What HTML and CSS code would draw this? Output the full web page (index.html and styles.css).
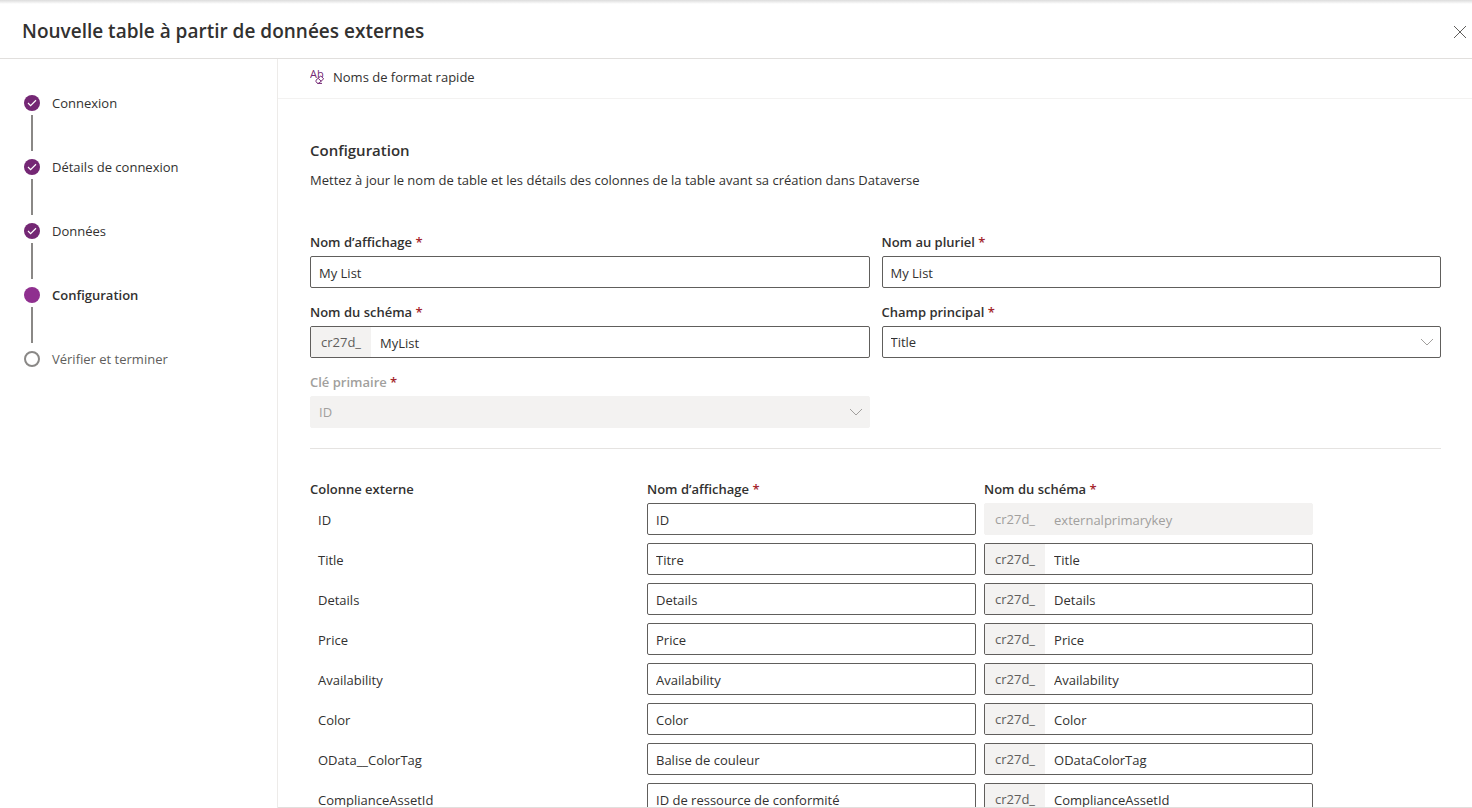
FILE: index.html
```html
<!DOCTYPE html>
<html lang="fr">
<head>
<meta charset="utf-8">
<meta name="viewport" content="width=device-width, initial-scale=1">
<title>Nouvelle table à partir de données externes</title>
<link rel="stylesheet" href="styles.css">
</head>
<body>
<header class="header">
  <h1 class="title">Nouvelle table à partir de données externes</h1>
  <button class="close" type="button" aria-label="Fermer">
    <svg width="14" height="14" viewBox="0 0 14 14" fill="none" stroke="#605e5c"><path d="M1 1l12 12M13 1L1 13"/></svg>
  </button>
</header>
<div class="layout">
  <nav class="sidebar" aria-label="Étapes">
    <ol class="steps">
      <li class="step"><svg class="dot" viewBox="0 0 16 16"><circle cx="8" cy="8" r="8" fill="#742774"/><path d="M4 8l2.6 2.6L12 5.3" fill="none" stroke="#fff" stroke-width="1.2"/></svg><span>Connexion</span></li>
      <li class="step"><svg class="dot" viewBox="0 0 16 16"><circle cx="8" cy="8" r="8" fill="#742774"/><path d="M4 8l2.6 2.6L12 5.3" fill="none" stroke="#fff" stroke-width="1.2"/></svg><span>Détails de connexion</span></li>
      <li class="step"><svg class="dot" viewBox="0 0 16 16"><circle cx="8" cy="8" r="8" fill="#742774"/><path d="M4 8l2.6 2.6L12 5.3" fill="none" stroke="#fff" stroke-width="1.2"/></svg><span>Données</span></li>
      <li class="step current" aria-current="step"><svg class="dot" viewBox="0 0 16 16"><circle cx="8" cy="8" r="8" fill="#8f2f8f"/></svg><span>Configuration</span></li>
      <li class="step upcoming"><svg class="dot" viewBox="0 0 16 16"><circle cx="8" cy="8" r="7" fill="none" stroke="#8a8886" stroke-width="2"/></svg><span>Vérifier et terminer</span></li>
    </ol>
  </nav>
  <div class="panel">
    <div class="toolbar">
      <button class="command" type="button">
        <svg width="16" height="16" viewBox="0 0 16 16" fill="none" stroke="#742774"><text class="icon-text" x="0" y="9">Ab</text><path fill="#fff" d="M6 11.2l4.8-4.2 2.9 2.8-4.9 4.5H7.4L6 12.6zM8.2 9.3l3 3M7.5 14.4H12"/></svg>
        <span>Noms de format rapide</span>
      </button>
    </div>
    <main class="content">
      <h2 class="heading">Configuration</h2>
      <p class="description">Mettez à jour le nom de table et les détails des colonnes de la table avant sa création dans Dataverse</p>
      <form class="form">
        <div class="field">
          <label class="label" for="display">Nom d’affichage <span class="req">*</span></label>
          <input class="input" id="display" type="text" value="My List">
        </div>
        <div class="field">
          <label class="label" for="plural">Nom au pluriel <span class="req">*</span></label>
          <input class="input" id="plural" type="text" value="My List">
        </div>
        <div class="field">
          <label class="label" for="schema">Nom du schéma <span class="req">*</span></label>
          <div class="group"><span class="prefix">cr27d_</span><input class="bare" id="schema" type="text" value="MyList"></div>
        </div>
        <div class="field">
          <label class="label" for="primary">Champ principal <span class="req">*</span></label>
          <div class="picker">
            <select class="select" id="primary"><option>Title</option></select>
            <svg class="chevron" width="14" height="8" viewBox="0 0 14 8"><path d="M1 1l6 6 6-6"/></svg>
          </div>
        </div>
        <div class="field">
          <label class="label muted" for="key">Clé primaire <span class="req">*</span></label>
          <div class="picker">
            <select class="select" id="key" disabled><option>ID</option></select>
            <svg class="chevron" width="14" height="8" viewBox="0 0 14 8"><path d="M1 1l6 6 6-6"/></svg>
          </div>
        </div>
      </form>
      <hr class="rule">
      <table class="columns">
        <thead>
          <tr><th scope="col">Colonne externe</th><th scope="col" id="h-name">Nom d’affichage <span class="req">*</span></th><th scope="col" id="h-schema">Nom du schéma <span class="req">*</span></th></tr>
        </thead>
        <tbody>
          <tr><td class="source">ID</td><td><input class="input" type="text" aria-labelledby="h-name" value="ID"></td><td><div class="group disabled"><span class="prefix">cr27d_</span><input class="bare" type="text" aria-labelledby="h-schema" value="externalprimarykey" disabled></div></td></tr>
          <tr><td class="source">Title</td><td><input class="input" type="text" aria-labelledby="h-name" value="Titre"></td><td><div class="group"><span class="prefix">cr27d_</span><input class="bare" type="text" aria-labelledby="h-schema" value="Title"></div></td></tr>
          <tr><td class="source">Details</td><td><input class="input" type="text" aria-labelledby="h-name" value="Details"></td><td><div class="group"><span class="prefix">cr27d_</span><input class="bare" type="text" aria-labelledby="h-schema" value="Details"></div></td></tr>
          <tr><td class="source">Price</td><td><input class="input" type="text" aria-labelledby="h-name" value="Price"></td><td><div class="group"><span class="prefix">cr27d_</span><input class="bare" type="text" aria-labelledby="h-schema" value="Price"></div></td></tr>
          <tr><td class="source">Availability</td><td><input class="input" type="text" aria-labelledby="h-name" value="Availability"></td><td><div class="group"><span class="prefix">cr27d_</span><input class="bare" type="text" aria-labelledby="h-schema" value="Availability"></div></td></tr>
          <tr><td class="source">Color</td><td><input class="input" type="text" aria-labelledby="h-name" value="Color"></td><td><div class="group"><span class="prefix">cr27d_</span><input class="bare" type="text" aria-labelledby="h-schema" value="Color"></div></td></tr>
          <tr><td class="source">OData__ColorTag</td><td><input class="input" type="text" aria-labelledby="h-name" value="Balise de couleur"></td><td><div class="group"><span class="prefix">cr27d_</span><input class="bare" type="text" aria-labelledby="h-schema" value="ODataColorTag"></div></td></tr>
          <tr><td class="source">ComplianceAssetId</td><td><input class="input" type="text" aria-labelledby="h-name" value="ID de ressource de conformité"></td><td><div class="group"><span class="prefix">cr27d_</span><input class="bare" type="text" aria-labelledby="h-schema" value="ComplianceAssetId"></div></td></tr>
        </tbody>
      </table>
    </main>
  </div>
</div>
</body>
</html>
```
FILE: styles.css
```css
* {
  box-sizing: border-box;
}

body {
  margin: 0;
  height: 100vh;
  display: flex;
  flex-direction: column;
  overflow: hidden;
  background: #fff;
  color: #323130;
  font: 13px/20px "Segoe UI", "Open Sans", sans-serif;
}

button,
input,
select {
  font: inherit;
  color: inherit;
}

.header {
  display: flex;
  align-items: center;
  justify-content: space-between;
  padding: 17px 4px 13px 22px;
  border-bottom: 1px solid #e1dfdd;
  background: linear-gradient(#dcdcdc, #fff 4px);
}

.title {
  margin: 0;
  font-size: 19px;
  line-height: 28px;
  font-weight: 600;
}

.close {
  display: flex;
  padding: 2px 1px 0;
  border: 0;
  background: none;
}

.layout {
  flex: 1;
  min-height: 0;
  display: flex;
}

.sidebar {
  flex: 0 0 278px;
  padding: 36px 24px;
  border-right: 1px solid #edebe9;
}

.steps {
  margin: 0;
  padding: 0;
  list-style: none;
}

.step {
  display: grid;
  grid-template-columns: 16px 1fr;
  column-gap: 12px;
  line-height: 16px;
}

.dot {
  width: 16px;
  height: 16px;
}

.step:not(:last-child)::after {
  content: "";
  justify-self: center;
  width: 2px;
  height: 36px;
  margin: 4px 0 8px;
  background: #8a8886;
}

.current {
  font-weight: 600;
}

.upcoming {
  color: #605e5c;
}

.panel {
  flex: 1;
  min-width: 0;
  display: flex;
  flex-direction: column;
  border-bottom: 1px solid #e1dfdd;
}

.toolbar {
  padding: 8px 32px 11px;
  border-bottom: 1px solid #f3f2f1;
}

.command {
  display: flex;
  align-items: center;
  gap: 7px;
  padding: 0;
  border: 0;
  background: none;
}

.icon-text {
  font-size: 11px;
  fill: #742774;
  stroke: none;
}

.content {
  flex: 1;
  min-height: 0;
  overflow: hidden;
  padding: 39px 31px 0 32px;
}

.heading {
  margin: 0 0 8px;
  font-size: 15px;
  line-height: 24px;
  font-weight: 600;
}

.description {
  margin: 0 0 42px;
}

.form {
  display: grid;
  grid-template-columns: 1fr 1fr;
  gap: 14px 12px;
}

.label {
  display: block;
  padding-bottom: 4px;
  font-weight: 600;
}

.muted {
  color: #a19f9d;
}

.req {
  color: #a4262c;
}

.input,
.select,
.group {
  display: block;
  width: 100%;
  height: 32px;
  border: 1px solid #605e5c;
  border-radius: 2px;
  background: #fff;
}

.input {
  padding: 2px 8px 0;
}

.group {
  display: flex;
  overflow: hidden;
}

.prefix {
  padding: 5px 10px;
  background: #f3f2f1;
  color: #605e5c;
}

.bare {
  flex: 1;
  min-width: 0;
  padding: 2px 9px 0;
  border: 0;
  background: none;
}

.disabled,
.select:disabled {
  border-color: #f3f2f1;
  background: #f3f2f1;
  color: #a19f9d;
  opacity: 1;
}

.disabled .prefix {
  color: #a19f9d;
}

.picker {
  position: relative;
}

.select {
  appearance: none;
  padding: 0 32px 0 8px;
}

.chevron {
  position: absolute;
  right: 7px;
  top: 12px;
  fill: none;
  stroke: #a19f9d;
  pointer-events: none;
}

.rule {
  height: 1px;
  margin: 20px 0 30px;
  border: 0;
  background: #e5e3e1;
}

.columns {
  width: calc(100% - 120px);
  table-layout: fixed;
  border-collapse: collapse;
}

.columns th {
  padding: 0 8px 4px 0;
  text-align: left;
  font-weight: 600;
}

.columns td {
  padding: 0 8px 8px 0;
}

.columns .source {
  padding: 2px 8px 8px;
}
```
